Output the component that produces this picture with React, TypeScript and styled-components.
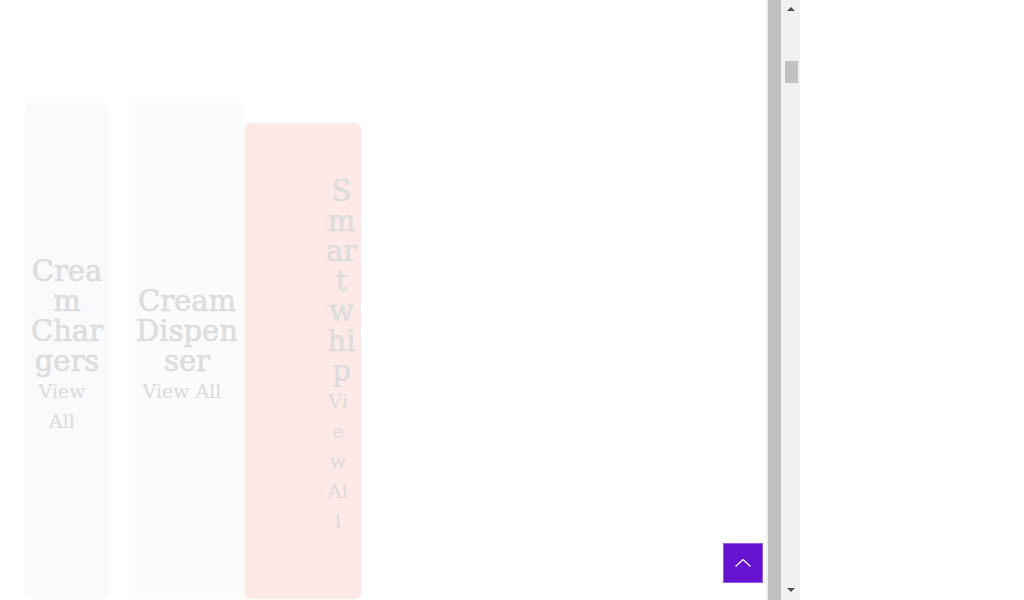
import React from "react";
import styled, { createGlobalStyle } from "styled-components";

const Global = createGlobalStyle`
  html, body { margin: 0; padding: 0; background: #ffffff; overflow: hidden; }
  body { width: 1024px; height: 600px; }
  * { box-sizing: border-box; }
`;

const Page = styled.div`
  display: flex;
  width: 1024px;
  height: 600px;
  position: relative;
`;

const Main = styled.div`
  width: 766px;
  height: 600px;
  display: flex;
  align-items: flex-start;
  padding: 103px 0 0 25px;
  overflow: hidden;
`;

const Card = styled.div<{ $w: number; $bg: string; $top: number; $pl: number; $pr: number; $gap: number }>`
  flex: none;
  width: ${(p) => p.$w}px;
  height: ${(p) => 496 - p.$top}px;
  margin-top: ${(p) => p.$top}px;
  margin-right: ${(p) => p.$gap}px;
  background: ${(p) => p.$bg};
  border-radius: 5px;
  display: flex;
  flex-direction: column;
  justify-content: center;
  align-items: flex-start;
  padding: 0 ${(p) => p.$pr}px 10px ${(p) => p.$pl}px;
  text-align: center;
  font-family: "DejaVu Serif", "Liberation Serif", serif;
  color: #dddddd;
  overflow-wrap: break-word;
  word-break: break-word;
`;

const Title = styled.div`
  width: 100%;
  font-size: 29px;
  line-height: 30px;
  font-weight: 400;
  -webkit-text-stroke: 0.7px #dddddd;
`;

const Link = styled.div<{ $w?: number; $ml?: number }>`
  width: ${(p) => (p.$w ? `${p.$w}px` : "100%")};
  margin-left: ${(p) => p.$ml ?? 0}px;
  padding-right: 10px;
  font-size: 19px;
  line-height: 30px;
  -webkit-text-stroke: 0.2px #dddddd;
`;

const Gutter = styled.div`
  width: 2px;
  height: 600px;
  background: #f0f0f0;
`;

const Strip = styled.div`
  width: 13px;
  height: 600px;
  background: #c1c1c1;
`;

const Track = styled.div`
  width: 19px;
  height: 600px;
  background: #f1f1f1;
  display: flex;
  flex-direction: column;
  align-items: center;
  padding: 7px 0 8px 1px;
`;

const Arrow = styled.div<{ $up?: boolean }>`
  width: 0;
  height: 0;
  border-left: 4px solid transparent;
  border-right: 4px solid transparent;
  ${(p) => (p.$up ? "border-bottom: 4px solid #505050;" : "border-top: 4px solid #505050;")}
  margin-top: ${(p) => (p.$up ? "0" : "auto")};
`;

const Thumb = styled.div`
  width: 13px;
  height: 22px;
  background: #c1c1c1;
  margin-top: 50px;
`;

const ToTop = styled.button`
  position: absolute;
  left: 723px;
  top: 543px;
  width: 40px;
  height: 40px;
  background: #6613d1;
  border: 1px solid #9a5ae6;
  padding: 0;
  display: flex;
  align-items: center;
  justify-content: center;
  cursor: pointer;
`;

export default function App() {
  return (
    <Page>
      <Global />
      <Main>
        <Card $w={84} $bg="#f9fafc" $top={0} $pl={4} $pr={4} $gap={20}>
          <Title>Cream Chargers</Title>
          <Link>View All</Link>
        </Card>
        <Card $w={116} $bg="#fbfbfa" $top={0} $pl={3} $pr={3} $gap={0}>
          <Title>Cream Dispenser</Title>
          <Link>View All</Link>
        </Card>
        <Card $w={116} $bg="#ffe9e7" $top={20} $pl={79} $pr={2} $gap={0}>
          <Title>Smartwhip</Title>
          <Link $w={32} $ml={3}>View All</Link>
        </Card>
      </Main>
      <Gutter />
      <Strip />
      <Track>
        <Arrow $up />
        <Thumb />
        <Arrow />
      </Track>
      <ToTop aria-label="Back to top">
        <svg width="16" height="8" viewBox="0 0 16 8" fill="none">
          <path d="M0.5 7.5 L8 0.5 L15.5 7.5" stroke="#ffffff" strokeWidth="1.2" />
        </svg>
      </ToTop>
    </Page>
  );
}
